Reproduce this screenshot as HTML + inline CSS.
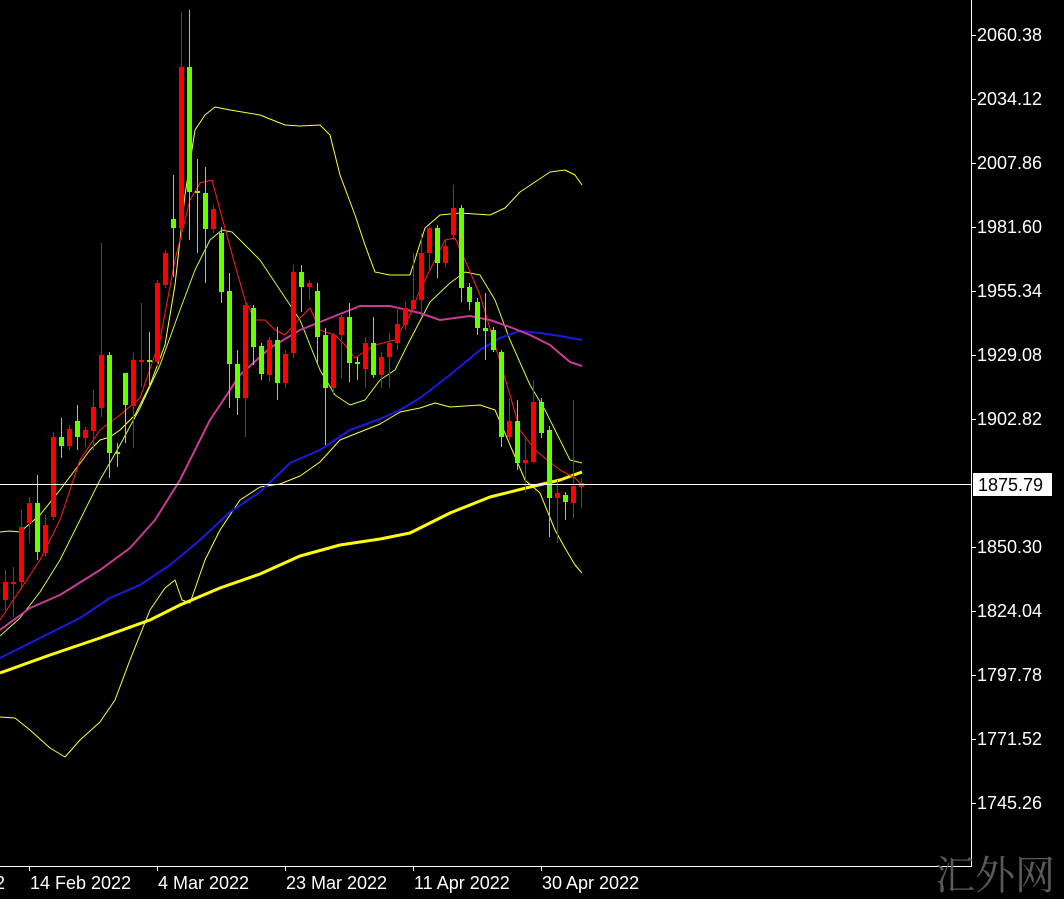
<!DOCTYPE html>
<html><head><meta charset="utf-8"><style>
html,body{margin:0;padding:0;background:#000;width:1064px;height:899px;overflow:hidden}
svg{display:block}
text{font-family:"Liberation Sans",sans-serif;font-size:18px;fill:#fff}
</style></head><body>
<svg width="1064" height="899" viewBox="0 0 1064 899" xmlns="http://www.w3.org/2000/svg">
<rect width="1064" height="899" fill="#000"/>
<g fill="none" stroke-linejoin="round">
<polyline stroke="#ffff40" stroke-width="1" points="0,532 10,531 20,532 40,515 60,490 75,470 90,450 100,440 110,437 120,430 135,415 150,385 165,345 175,285 185,195 195,130 205,115 215,107 230,110 260,115 285,125 300,126 320,125 330,135 340,175 355,215 365,245 375,272 390,275 410,275 425,228 440,215 460,213 490,215 505,208 520,192 535,182 550,172 565,170 575,175 582,185"/>
<polyline stroke="#ffff40" stroke-width="1" points="0,717 15,718 30,730 50,748 65,757 80,740 100,722 115,700 130,660 150,610 165,588 175,580 182,600 190,603 205,560 220,530 240,500 260,487 280,484 300,476 320,462 340,440 360,432 380,424 400,412 420,408 435,403 450,407 480,405 495,410 510,445 525,480 540,493 555,530 565,548 575,565 582,573"/>
<polyline stroke="#ccff44" stroke-width="1" points="0,636 20,618 40,592 60,560 80,520 100,480 120,445 140,408 160,365 180,310 195,270 210,240 222,230 232,232 250,250 260,260 280,290 300,320 320,370 335,395 350,405 365,400 380,380 395,370 410,340 430,302 450,283 465,272 480,275 495,300 510,340 530,385 545,410 560,440 570,460 582,463"/>
<polyline stroke="#ffff00" stroke-width="3" points="0,673 50,655 100,638 150,620 180,605 220,588 260,574 300,556 340,545 380,539 410,533 450,513 490,497 530,487 560,480 582,472"/>
<polyline stroke="#1a1ae0" stroke-width="2" points="0,658 40,638 80,618 110,598 140,585 170,565 200,540 230,512 260,492 290,463 320,450 350,430 380,419 400,410 420,398 450,375 480,350 500,338 520,331 540,333 560,336 582,340"/>
<polyline stroke="#c83c96" stroke-width="2" points="0,630 30,608 60,595 100,570 130,548 155,520 180,480 210,420 240,375 270,348 300,330 330,318 360,306 390,306 420,313 440,320 470,316 490,320 510,327 530,335 550,345 570,362 582,366"/>
<polyline stroke="#ff2020" stroke-width="1" points="0,620 20,590 40,560 60,520 80,460 100,430 120,415 140,398 160,340 175,260 190,200 200,183 212,180 220,210 235,265 245,300 255,320 265,320 275,330 285,335 300,318 310,308 320,330 335,335 345,345 355,358 375,345 395,340 410,315 420,290 435,260 445,240 455,238 465,260 480,295 495,345 510,395 520,430 535,450 550,462 560,470 575,478 582,485"/>
</g>
<g fill="#ff0000" stroke="#ff0000">
<line x1="5.5" x2="5.5" y1="570" y2="610"/><rect x="3" y="582" width="5" height="18" stroke="none"/>
<line x1="13.5" x2="13.5" y1="567" y2="617"/><rect x="11" y="582" width="5" height="2" stroke="none"/>
<line x1="21.5" x2="21.5" y1="510" y2="590"/><rect x="19" y="527" width="5" height="55" stroke="none"/>
<line x1="29.5" x2="29.5" y1="497" y2="543"/><rect x="27" y="503" width="5" height="20" stroke="none"/>
<line x1="45.5" x2="45.5" y1="515" y2="557"/><rect x="43" y="525" width="5" height="28" stroke="none"/>
<line x1="53.5" x2="53.5" y1="432" y2="520"/><rect x="51" y="437" width="5" height="80" stroke="none"/>
<line x1="69.5" x2="69.5" y1="425" y2="450"/><rect x="67" y="429" width="5" height="17" stroke="none"/>
<line x1="85.5" x2="85.5" y1="427" y2="447"/><rect x="83" y="430" width="5" height="8" stroke="none"/>
<line x1="93.5" x2="93.5" y1="390" y2="450"/><rect x="91" y="407" width="5" height="24" stroke="none"/>
<line x1="101.5" x2="101.5" y1="243" y2="417"/><rect x="99" y="355" width="5" height="53" stroke="none"/>
<line x1="133.5" x2="133.5" y1="353" y2="448"/><rect x="131" y="360" width="5" height="46" stroke="none"/>
<line x1="141.5" x2="141.5" y1="303" y2="387"/><rect x="139" y="360" width="5" height="2" stroke="none"/>
<line x1="157.5" x2="157.5" y1="280" y2="366"/><rect x="155" y="283" width="5" height="79" stroke="none"/>
<line x1="165.5" x2="165.5" y1="250" y2="288"/><rect x="163" y="253" width="5" height="32" stroke="none"/>
<line x1="181.5" x2="181.5" y1="12" y2="240"/><rect x="179" y="67" width="5" height="161" stroke="none"/>
<line x1="213.5" x2="213.5" y1="205" y2="233"/><rect x="211" y="209" width="5" height="20" stroke="none"/>
<line x1="245.5" x2="245.5" y1="303" y2="437"/><rect x="243" y="305" width="5" height="93" stroke="none"/>
<line x1="269.5" x2="269.5" y1="337" y2="382"/><rect x="267" y="340" width="5" height="35" stroke="none"/>
<line x1="285.5" x2="285.5" y1="350" y2="388"/><rect x="283" y="354" width="5" height="29" stroke="none"/>
<line x1="293.5" x2="293.5" y1="265" y2="358"/><rect x="291" y="272" width="5" height="81" stroke="none"/>
<line x1="309.5" x2="309.5" y1="280" y2="300"/><rect x="307" y="283" width="5" height="4" stroke="none"/>
<line x1="333.5" x2="333.5" y1="333" y2="395"/><rect x="331" y="335" width="5" height="53" stroke="none"/>
<line x1="341.5" x2="341.5" y1="315" y2="378"/><rect x="339" y="317" width="5" height="18" stroke="none"/>
<line x1="365.5" x2="365.5" y1="337" y2="388"/><rect x="363" y="343" width="5" height="26" stroke="none"/>
<line x1="381.5" x2="381.5" y1="352" y2="388"/><rect x="379" y="357" width="5" height="18" stroke="none"/>
<line x1="389.5" x2="389.5" y1="333" y2="388"/><rect x="387" y="343" width="5" height="14" stroke="none"/>
<line x1="397.5" x2="397.5" y1="307" y2="350"/><rect x="395" y="324" width="5" height="19" stroke="none"/>
<line x1="405.5" x2="405.5" y1="302" y2="330"/><rect x="403" y="308" width="5" height="17" stroke="none"/>
<line x1="413.5" x2="413.5" y1="253" y2="312"/><rect x="411" y="300" width="5" height="9" stroke="none"/>
<line x1="421.5" x2="421.5" y1="233" y2="317"/><rect x="419" y="253" width="5" height="47" stroke="none"/>
<line x1="429.5" x2="429.5" y1="227" y2="270"/><rect x="427" y="228" width="5" height="25" stroke="none"/>
<line x1="445.5" x2="445.5" y1="240" y2="267"/><rect x="443" y="246" width="5" height="17" stroke="none"/>
<line x1="453.5" x2="453.5" y1="185" y2="240"/><rect x="451" y="208" width="5" height="27" stroke="none"/>
<line x1="509.5" x2="509.5" y1="398" y2="440"/><rect x="507" y="421" width="5" height="16" stroke="none"/>
<line x1="525.5" x2="525.5" y1="437" y2="493"/><rect x="523" y="460" width="5" height="3" stroke="none"/>
<line x1="533.5" x2="533.5" y1="380" y2="463"/><rect x="531" y="402" width="5" height="60" stroke="none"/>
<line x1="557.5" x2="557.5" y1="480" y2="543"/><rect x="555" y="493" width="5" height="5" stroke="none"/>
<line x1="573.5" x2="573.5" y1="400" y2="518"/><rect x="571" y="486" width="5" height="17" stroke="none"/>
<line x1="581.5" x2="581.5" y1="478" y2="508"/><rect x="579" y="483" width="5" height="4" stroke="none"/>
</g>
<g fill="#66ff00" stroke="#66ff00">
<line x1="37.5" x2="37.5" y1="475" y2="560"/><rect x="35" y="503" width="5" height="49" stroke="none"/>
<line x1="61.5" x2="61.5" y1="418" y2="458"/><rect x="59" y="437" width="5" height="9" stroke="none"/>
<line x1="77.5" x2="77.5" y1="405" y2="450"/><rect x="75" y="421" width="5" height="16" stroke="none"/>
<line x1="109.5" x2="109.5" y1="352" y2="478"/><rect x="107" y="355" width="5" height="98" stroke="none"/>
<line x1="117.5" x2="117.5" y1="443" y2="467"/><rect x="115" y="452" width="5" height="2" stroke="none"/>
<line x1="125.5" x2="125.5" y1="373" y2="443"/><rect x="123" y="373" width="5" height="32" stroke="none"/>
<line x1="149.5" x2="149.5" y1="332" y2="387"/><rect x="147" y="360" width="5" height="2" stroke="none"/>
<line x1="173.5" x2="173.5" y1="175" y2="277"/><rect x="171" y="219" width="5" height="9" stroke="none"/>
<line x1="189.5" x2="189.5" y1="10" y2="240"/><rect x="187" y="67" width="5" height="125" stroke="none"/>
<line x1="197.5" x2="197.5" y1="159" y2="253"/><rect x="195" y="191" width="5" height="2" stroke="none"/>
<line x1="205.5" x2="205.5" y1="167" y2="283"/><rect x="203" y="193" width="5" height="36" stroke="none"/>
<line x1="221.5" x2="221.5" y1="227" y2="303"/><rect x="219" y="233" width="5" height="59" stroke="none"/>
<line x1="229.5" x2="229.5" y1="273" y2="408"/><rect x="227" y="291" width="5" height="73" stroke="none"/>
<line x1="237.5" x2="237.5" y1="350" y2="415"/><rect x="235" y="364" width="5" height="34" stroke="none"/>
<line x1="253.5" x2="253.5" y1="305" y2="365"/><rect x="251" y="308" width="5" height="39" stroke="none"/>
<line x1="261.5" x2="261.5" y1="343" y2="380"/><rect x="259" y="346" width="5" height="28" stroke="none"/>
<line x1="277.5" x2="277.5" y1="327" y2="400"/><rect x="275" y="340" width="5" height="43" stroke="none"/>
<line x1="301.5" x2="301.5" y1="265" y2="312"/><rect x="299" y="272" width="5" height="15" stroke="none"/>
<line x1="317.5" x2="317.5" y1="283" y2="363"/><rect x="315" y="291" width="5" height="46" stroke="none"/>
<line x1="325.5" x2="325.5" y1="328" y2="445"/><rect x="323" y="335" width="5" height="53" stroke="none"/>
<line x1="349.5" x2="349.5" y1="303" y2="382"/><rect x="347" y="317" width="5" height="46" stroke="none"/>
<line x1="357.5" x2="357.5" y1="357" y2="380"/><rect x="355" y="362" width="5" height="2" stroke="none"/>
<line x1="373.5" x2="373.5" y1="317" y2="378"/><rect x="371" y="343" width="5" height="32" stroke="none"/>
<line x1="437.5" x2="437.5" y1="225" y2="278"/><rect x="435" y="228" width="5" height="35" stroke="none"/>
<line x1="461.5" x2="461.5" y1="205" y2="302"/><rect x="459" y="208" width="5" height="80" stroke="none"/>
<line x1="469.5" x2="469.5" y1="283" y2="310"/><rect x="467" y="287" width="5" height="15" stroke="none"/>
<line x1="477.5" x2="477.5" y1="298" y2="335"/><rect x="475" y="302" width="5" height="26" stroke="none"/>
<line x1="485.5" x2="485.5" y1="293" y2="360"/><rect x="483" y="328" width="5" height="3" stroke="none"/>
<line x1="493.5" x2="493.5" y1="327" y2="352"/><rect x="491" y="330" width="5" height="20" stroke="none"/>
<line x1="501.5" x2="501.5" y1="350" y2="447"/><rect x="499" y="352" width="5" height="85" stroke="none"/>
<line x1="517.5" x2="517.5" y1="400" y2="470"/><rect x="515" y="421" width="5" height="42" stroke="none"/>
<line x1="541.5" x2="541.5" y1="398" y2="438"/><rect x="539" y="402" width="5" height="31" stroke="none"/>
<line x1="549.5" x2="549.5" y1="426" y2="537"/><rect x="547" y="430" width="5" height="68" stroke="none"/>
<line x1="565.5" x2="565.5" y1="492" y2="520"/><rect x="563" y="495" width="5" height="7" stroke="none"/>
</g>
<line x1="0" x2="971" y1="484.5" y2="484.5" stroke="#fff" stroke-width="1"/>
<line x1="971.5" x2="971.5" y1="0" y2="866" stroke="#fff"/>
<line x1="0" x2="972" y1="866.5" y2="866.5" stroke="#fff"/>
<g stroke="#fff">
<line x1="971" x2="976" y1="35.5" y2="35.5"/><line x1="971" x2="976" y1="99.5" y2="99.5"/><line x1="971" x2="976" y1="163.5" y2="163.5"/><line x1="971" x2="976" y1="227.5" y2="227.5"/><line x1="971" x2="976" y1="291.5" y2="291.5"/><line x1="971" x2="976" y1="355.5" y2="355.5"/><line x1="971" x2="976" y1="419.5" y2="419.5"/><line x1="971" x2="976" y1="547.5" y2="547.5"/><line x1="971" x2="976" y1="611.5" y2="611.5"/><line x1="971" x2="976" y1="675.5" y2="675.5"/><line x1="971" x2="976" y1="739.5" y2="739.5"/><line x1="971" x2="976" y1="803.5" y2="803.5"/>
<line x1="29.5" x2="29.5" y1="866" y2="871"/><line x1="157.5" x2="157.5" y1="866" y2="871"/><line x1="285.5" x2="285.5" y1="866" y2="871"/><line x1="413.5" x2="413.5" y1="866" y2="871"/><line x1="541.5" x2="541.5" y1="866" y2="871"/>
</g>
<g>
<text x="977" y="41">2060.38</text>
<text x="977" y="105">2034.12</text>
<text x="977" y="169">2007.86</text>
<text x="977" y="233">1981.60</text>
<text x="977" y="297">1955.34</text>
<text x="977" y="361">1929.08</text>
<text x="977" y="425">1902.82</text>
<text x="977" y="553">1850.30</text>
<text x="977" y="617">1824.04</text>
<text x="977" y="681">1797.78</text>
<text x="977" y="745">1771.52</text>
<text x="977" y="809">1745.26</text>
</g>
<rect x="973" y="473" width="79" height="23" fill="#fff"/>
<text x="978" y="491" style="fill:#000">1875.79</text>
<g>
<text x="5" y="889" text-anchor="end">2022</text>
<text x="30" y="889">14 Feb 2022</text>
<text x="158" y="889">4 Mar 2022</text>
<text x="286" y="889">23 Mar 2022</text>
<text x="414" y="889">11 Apr 2022</text>
<text x="542" y="889">30 Apr 2022</text>
</g>
<text x="935" y="889" style="font-family:'Noto Serif CJK SC','Liberation Serif',serif;font-size:40px;fill:#5a5a5a">汇外网</text>
</svg>
</body></html>
